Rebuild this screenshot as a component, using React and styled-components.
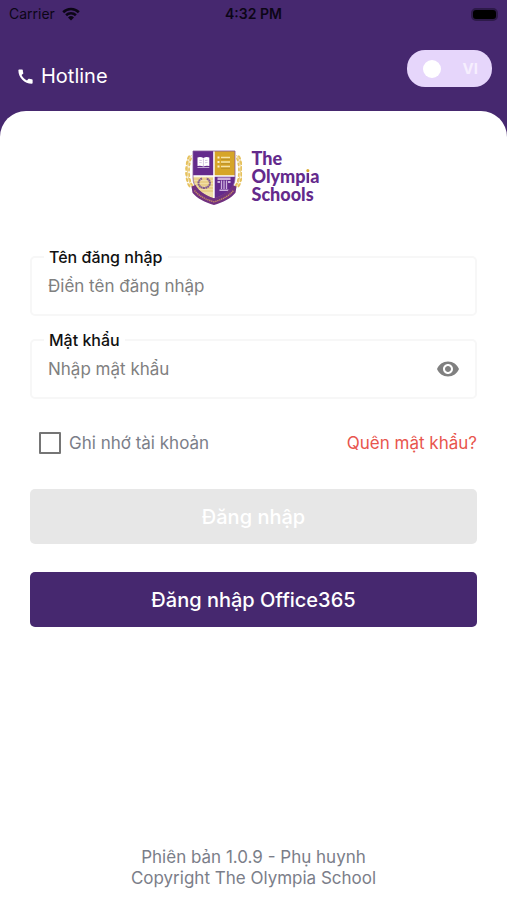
import React, { useId, useState } from "react";
import styled, { createGlobalStyle, ThemeProvider } from "styled-components";
import { MdCall, MdVisibility } from "react-icons/md";

const theme = {
  color: {
    purple: "#46286f",
    lilac: "#e6d6fb",
    logo: "#642a8c",
    gold: "#d9a92c",
    white: "#fff",
    black: "#111",
    grey: "#7b7e89",
    placeholder: "#808080",
    border: "#f7f7f7",
    disabled: "#e7e7e7",
    red: "#e8554d",
  },
};

const GlobalStyle = createGlobalStyle`
  * {
    box-sizing: border-box;
  }

  body {
    margin: 0;
    font-family: Inter, "Noto Sans", sans-serif;
  }

  button,
  input {
    font-family: inherit;
  }
`;

const Page = styled.div`
  background: ${({ theme }) => theme.color.purple};
  display: flex;
  flex-direction: column;
  min-height: 100vh;
`;

const StatusBar = styled.div`
  align-items: center;
  color: #0c0616;
  display: grid;
  font-size: 14px;
  grid-template-columns: 1fr auto 1fr;
  height: 28px;
  line-height: 20px;
  padding: 0 9px;
`;

const Carrier = styled.div`
  align-items: center;
  display: flex;
  gap: 7px;
`;

const Clock = styled.div`
  font-weight: 600;
`;

const Battery = styled.div`
  background: #000;
  border: 2px solid #2d1a49;
  border-radius: 5px;
  height: 13px;
  justify-self: end;
  width: 27px;
`;

const Header = styled.header`
  align-items: flex-end;
  display: flex;
  justify-content: space-between;
  padding: 22px 15px 24px 16px;
`;

const Hotline = styled.a`
  align-items: center;
  color: ${({ theme }) => theme.color.white};
  display: flex;
  font-size: 20px;
  gap: 6px;
  line-height: 22px;
  text-decoration: none;
`;

const LanguageSwitch = styled.button`
  align-items: center;
  background: ${({ theme }) => theme.color.lilac};
  border: none;
  border-radius: 18px;
  color: #f6effe;
  cursor: pointer;
  display: flex;
  font-size: 15px;
  font-weight: 700;
  height: 37px;
  justify-content: space-between;
  padding: 0 14px 0 16px;
  width: 85px;
`;

const Knob = styled.span`
  background: ${({ theme }) => theme.color.white};
  border-radius: 50%;
  height: 18px;
  width: 18px;
`;

const Panel = styled.main`
  background: ${({ theme }) => theme.color.white};
  border-radius: 26px 26px 0 0;
  display: flex;
  flex: 1;
  flex-direction: column;
  padding: 38px 30px 11px;
`;

const Logo = styled.div`
  color: ${({ theme }) => theme.color.logo};
  display: flex;
  gap: 10px;
  justify-content: center;
  margin-bottom: 41px;
  padding-right: 3px;
`;

const LogoName = styled.div`
  font-family: Lato, sans-serif;
  font-size: 18px;
  font-weight: 900;
  line-height: 18px;
`;

const Accent = styled.span`
  background: linear-gradient(
    ${({ theme }) => theme.color.gold} 8px,
    ${({ theme }) => theme.color.logo} 8px
  );
  background-clip: text;
  color: transparent;
`;

const Form = styled.form`
  display: flex;
  flex-direction: column;
`;

const Fieldset = styled.fieldset`
  border: 2px solid ${({ theme }) => theme.color.border};
  border-radius: 5px;
  margin: 0 0 14px;
  min-width: 0;
  padding: 0 15px 9px 12px;
`;

const Legend = styled.legend`
  color: ${({ theme }) => theme.color.black};
  font-size: 16px;
  font-weight: 500;
  line-height: 20px;
  padding: 0 5px;
`;

const InputRow = styled.div`
  align-items: center;
  display: flex;
  height: 38px;
  padding-left: 4px;
`;

const Input = styled.input`
  background: none;
  border: none;
  color: ${({ theme }) => theme.color.black};
  flex: 1;
  font-size: 17px;
  height: 100%;
  min-width: 0;
  outline: none;
  padding: 0;

  &::placeholder {
    color: ${({ theme }) => theme.color.placeholder};
    opacity: 1;
  }
`;

const IconButton = styled.button`
  background: none;
  border: none;
  color: ${({ theme }) => theme.color.placeholder};
  cursor: pointer;
  display: flex;
  padding: 0;
`;

const Options = styled.div`
  align-items: center;
  display: flex;
  font-size: 17px;
  justify-content: space-between;
  line-height: 22px;
  margin: 19px 0 35px;
`;

const Remember = styled.label`
  align-items: center;
  color: ${({ theme }) => theme.color.grey};
  display: flex;
  gap: 8px;
  padding-left: 9px;
`;

const Checkbox = styled.input`
  appearance: none;
  border: 2px solid #757575;
  border-radius: 1px;
  height: 22px;
  margin: 0;
  width: 22px;

  &:checked {
    background: ${({ theme }) => theme.color.purple};
  }
`;

const Forgot = styled.a`
  color: ${({ theme }) => theme.color.red};
  text-decoration: none;
`;

const Buttons = styled.div`
  display: grid;
  gap: 28px;
`;

const Button = styled.button`
  background: ${({ theme }) => theme.color.purple};
  border: none;
  border-radius: 5px;
  color: ${({ theme }) => theme.color.white};
  font-size: 20px;
  font-weight: 500;
  height: 55px;
  padding: 0;

  &:disabled {
    background: ${({ theme }) => theme.color.disabled};
  }
`;

const Footer = styled.footer`
  color: ${({ theme }) => theme.color.grey};
  font-size: 17px;
  line-height: 21px;
  margin-top: auto;
  text-align: center;
`;

const WifiIcon = () => (
  <svg width="18" height="14" viewBox="0 0 18 14" aria-hidden="true">
    <g fill="none" stroke="currentColor" strokeWidth="2.6">
      <path d="M1.2 5.2a11.2 11.2 0 0 1 15.6 0" />
      <path d="M4.1 8.3a7 7 0 0 1 9.8 0" />
    </g>
    <path d="M9 13.4 6 10.4a4.3 4.3 0 0 1 6 0z" fill="currentColor" />
  </svg>
);

const leaves = [
  [4.6, 9, 25],
  [3.2, 14, 12],
  [2.5, 19.5, 2],
  [2.5, 25, -8],
  [3.2, 30.5, -18],
  [4.9, 35.5, -32],
];

const Laurel = () => (
  <g fill="#e6c25f">
    <path
      d="M6.5 6C1 15 1 29 7.5 39"
      fill="none"
      stroke="#e6c25f"
      strokeWidth="0.8"
    />
    {leaves.map(([x, y, angle]) => (
      <g key={y} transform={`rotate(${angle} ${x} ${y})`}>
        <ellipse cx={x - 1.2} cy={y} rx="1.1" ry="2.5" />
        <ellipse cx={x + 1.6} cy={y + 1} rx="0.9" ry="2.2" />
      </g>
    ))}
  </g>
);

const Crest = () => {
  const clip = useId();

  return (
    <svg width="57" height="57" viewBox="0 0 57 57" aria-hidden="true">
      <clipPath id={clip}>
        <path d="M8 2h42v27c0 10-8 16-21 21C16 45 8 39 8 29z" />
      </clipPath>
      <Laurel />
      <g transform="translate(58 0) scale(-1 1)">
        <Laurel />
      </g>
      <g clipPath={`url(#${clip})`}>
        <path d="M8 2h20.500v24.500H8z" fill="#642a8c" />
        <path d="M29.500 2H51v24.500H29.500z" fill="#d6a528" />
        <path d="M8 27.500h20.500V52H8z" fill="#f0dda6" />
        <path d="M29.500 27.500H51V52H29.500z" fill="#642a8c" />
        <path
          d="M28.900 2v49M8 27h43"
          stroke="#fff"
          strokeWidth="1"
          fill="none"
        />
        <path
          d="M8 30h20M8 33h20M8 36h20M8 39h20M8 42h20"
          stroke="#dcb551"
          strokeWidth="0.7"
        />
      </g>
      <path
        d="M8 2h42v27c0 10-8 16-21 21C16 45 8 39 8 29z"
        fill="none"
        stroke="#87599a"
        strokeWidth="0.8"
      />
      {/* book */}
      <path
        d="M12.500 8.500q3.200-1 5.900.5 2.700-1.500 5.900-.5v8.500q-3.200-.8-5.900.5-2.700-1.300-5.900-.5z"
        fill="#fff"
      />
      <path
        d="M18.400 9.500v7.500M14.300 11.300l2.500.2M14.300 13.500l2.500.2M20 11.500l2.500-.2M20 13.700l2.500-.2"
        stroke="#a88bc0"
        strokeWidth="0.500"
      />
      <path d="M12.500 18.500h11.800" stroke="#d8c6e4" strokeWidth="0.800" />
      {/* scroll lines */}
      <path
        d="M36 8.500h9M36 13h9M36 17.500h9"
        stroke="#f6e3a6"
        strokeWidth="1.500"
      />
      <path
        d="M32.500 8.500h2M32.500 13h2M32.500 17.500h2"
        stroke="#fbf0cb"
        strokeWidth="1.800"
      />
      <path
        d="M36 10.300h9M36 14.800h9M36 19.300h9"
        stroke="#a37d22"
        strokeWidth="0.600"
      />
      {/* wreath */}
      <path
        d="M17 29.300c-5.500 2.500-4.500 9.200 2.200 9.700 6.700-.5 7.700-7.200 2.200-9.700"
        fill="none"
        stroke="#80588f"
        strokeWidth="2"
        strokeDasharray="1.800 0.400"
      />
      {/* column */}
      <path
        d="M32.500 28.500h13v2.500h-13zM32.500 32h2.500v2h-2.500zM43 32h2.500v2H43zM34.500 40.500h9v1.500h-9z"
        fill="#cdb1dd"
      />
      <path
        d="M36.500 31.500v8.500M39 31.500v8.500M41.500 31.500v8.500"
        stroke="#cdb1dd"
        strokeWidth="1.300"
      />
      {/* ribbon */}
      <path
        d="M6.500 37.500 10.500 36c3.500 6.500 10 10.500 18.500 13.300C37.500 46.500 44 42.500 47.500 36l4 1.500-1 6.300C46 49.500 38 53.500 29 56 20 53.500 12 49.500 7.500 43.800z"
        fill="#71317f"
      />
      <path
        d="M9.500 41.500C14 47 20.500 50.500 29 52.800 37.500 50.500 44 47 48.500 41.500"
        fill="none"
        stroke="#c78e62"
        strokeWidth="1.400"
        strokeDasharray="1.300 0.700"
      />
    </svg>
  );
};

const Field = ({ label, children, ...props }) => {
  const id = useId();

  return (
    <Fieldset>
      <Legend>
        <label htmlFor={id}>{label}</label>
      </Legend>
      <InputRow>
        <Input id={id} {...props} />
        {children}
      </InputRow>
    </Fieldset>
  );
};

const App = () => {
  const [username, setUsername] = useState("");
  const [password, setPassword] = useState("");
  const [isVisible, setIsVisible] = useState(false);
  const [isVietnamese, setIsVietnamese] = useState(true);

  return (
    <ThemeProvider theme={theme}>
      <GlobalStyle />
      <Page>
        <StatusBar>
          <Carrier>
            Carrier
            <WifiIcon />
          </Carrier>
          <Clock>4:32 PM</Clock>
          <Battery />
        </StatusBar>

        <Header>
          <Hotline href="#hotline">
            <MdCall size={19} />
            Hotline
          </Hotline>
          <LanguageSwitch
            aria-checked={isVietnamese}
            onClick={() => setIsVietnamese(!isVietnamese)}
            role="switch"
            type="button"
          >
            <Knob />
            {isVietnamese ? "VI" : "EN"}
          </LanguageSwitch>
        </Header>

        <Panel>
          <Logo>
            <Crest />
            <LogoName>
              The
              <br />
              Olymp<Accent>i</Accent>a
              <br />
              Schools
            </LogoName>
          </Logo>

          <Form onSubmit={(event) => event.preventDefault()}>
            <Field
              label="Tên đăng nhập"
              name="username"
              onChange={({ target }) => setUsername(target.value)}
              placeholder="Điền tên đăng nhập"
              type="text"
              value={username}
            />
            <Field
              label="Mật khẩu"
              name="password"
              onChange={({ target }) => setPassword(target.value)}
              placeholder="Nhập mật khẩu"
              type={isVisible ? "text" : "password"}
              value={password}
            >
              <IconButton
                aria-label="Hiện mật khẩu"
                onClick={() => setIsVisible(!isVisible)}
                type="button"
              >
                <MdVisibility size={24} />
              </IconButton>
            </Field>

            <Options>
              <Remember>
                <Checkbox name="remember" type="checkbox" />
                Ghi nhớ tài khoản
              </Remember>
              <Forgot href="#forgot">Quên mật khẩu?</Forgot>
            </Options>

            <Buttons>
              <Button disabled={!username || !password} type="submit">
                Đăng nhập
              </Button>
              <Button type="button">Đăng nhập Office365</Button>
            </Buttons>
          </Form>

          <Footer>
            Phiên bản 1.0.9 - Phụ huynh
            <br />
            Copyright The Olympia School
          </Footer>
        </Panel>
      </Page>
    </ThemeProvider>
  );
};

export default App;
